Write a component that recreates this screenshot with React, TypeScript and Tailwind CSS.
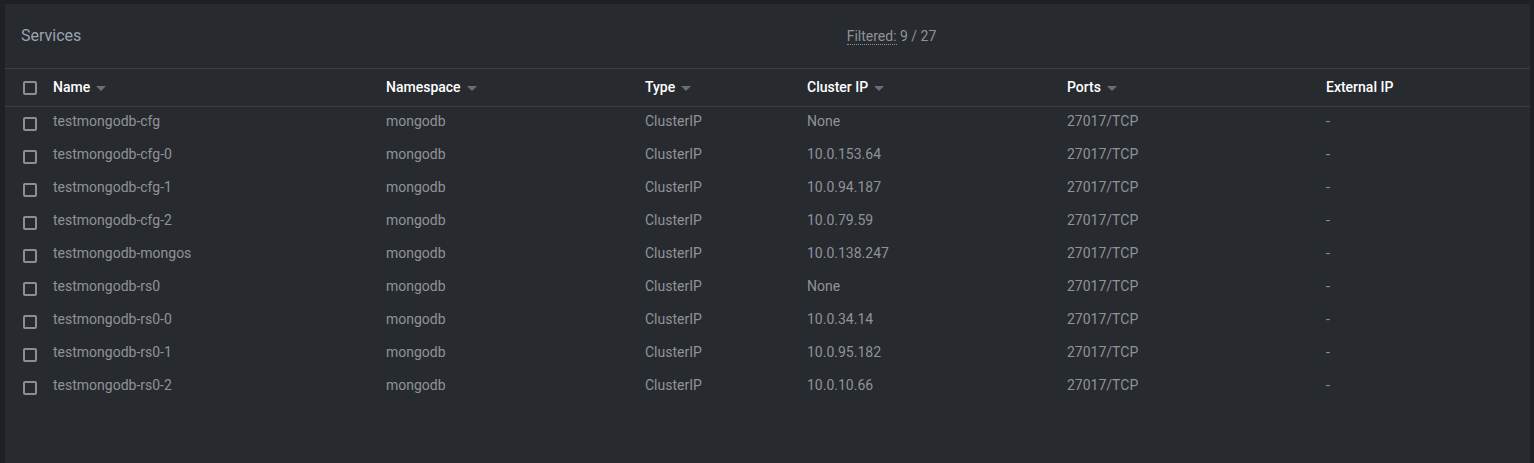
const services = [
  { name: 'testmongodb-cfg', ip: 'None' },
  { name: 'testmongodb-cfg-0', ip: '10.0.153.64' },
  { name: 'testmongodb-cfg-1', ip: '10.0.94.187' },
  { name: 'testmongodb-cfg-2', ip: '10.0.79.59' },
  { name: 'testmongodb-mongos', ip: '10.0.138.247' },
  { name: 'testmongodb-rs0', ip: 'None' },
  { name: 'testmongodb-rs0-0', ip: '10.0.34.14' },
  { name: 'testmongodb-rs0-1', ip: '10.0.95.182' },
  { name: 'testmongodb-rs0-2', ip: '10.0.10.66' },
];

const columns = [
  { label: 'Name', width: 'w-[333px]', sort: true },
  { label: 'Namespace', width: 'w-[259px]', sort: true },
  { label: 'Type', width: 'w-[162px]', sort: true },
  { label: 'Cluster IP', width: 'w-[260px]', sort: true },
  { label: 'Ports', width: 'w-[259px]', sort: true },
  { label: 'External IP', width: 'flex-1', sort: false },
];

const Checkbox = () => (
  <div className="w-[14px] h-[14px] border-2 border-[#8b8e93] rounded-[2px] shrink-0" />
);

const SortArrow = () => (
  <span className="ml-[6px] inline-block w-0 h-0 border-l-[5px] border-r-[5px] border-t-[5px] border-l-transparent border-r-transparent border-t-[#6b6e73] translate-y-[1px]" />
);

export default function App() {
  return (
    <div
      className="h-[463px] bg-[#1e2023] pt-[4px] pl-[5px] pr-[4px]"
      style={{ fontFamily: 'Roboto, "Liberation Sans", sans-serif' }}
    >
      <div className="h-full bg-[#272a2f]">
        <div className="relative h-[65px] flex items-center px-[16px] border-b border-[#3a3d42]">
          <span className="text-[16px] text-[#9ba3b1]">Services</span>
          <div className="absolute left-0 right-0 flex justify-center pointer-events-none">
            <span className="text-[14px] text-[#8f9399] ml-[248px]">
              <span className="border-b border-dotted border-[#8f9399]">Filtered:</span> 9 / 27
            </span>
          </div>
        </div>

        <div className="h-[38px] flex items-center border-b border-[#3a3d42] text-[14px] font-medium text-white">
          <div className="w-[48px] pl-[18px] flex items-center">
            <Checkbox />
          </div>
          {columns.map((c) => (
            <div key={c.label} className={`${c.width} flex items-center`}>
              {c.label}
              {c.sort && <SortArrow />}
            </div>
          ))}
        </div>

        {services.map((s) => (
          <div key={s.name} className="h-[33px] flex items-center text-[14px] text-[#8f9399]">
            <div className="w-[48px] pl-[18px] flex items-center">
              <Checkbox />
            </div>
            <div className="w-[333px] -translate-y-[2px]">{s.name}</div>
            <div className="w-[259px] -translate-y-[2px]">mongodb</div>
            <div className="w-[162px] -translate-y-[2px]">ClusterIP</div>
            <div className="w-[260px] -translate-y-[2px]">{s.ip}</div>
            <div className="w-[259px] -translate-y-[2px]">27017/TCP</div>
            <div className="flex-1 -translate-y-[2px]">-</div>
          </div>
        ))}
      </div>
    </div>
  );
}
